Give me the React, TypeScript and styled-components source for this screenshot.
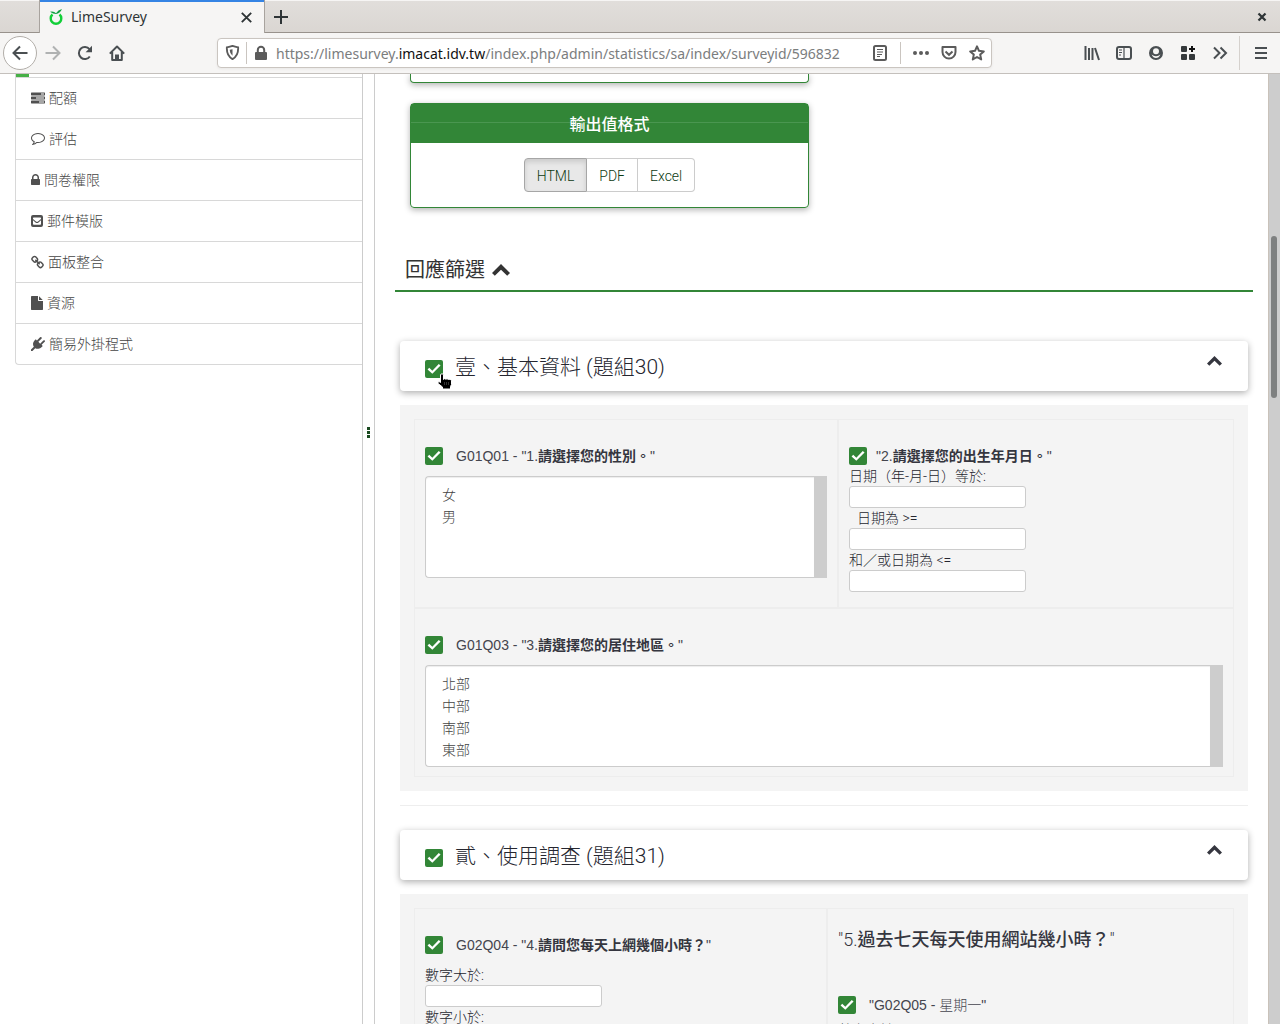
import React from "react";
import styled, { createGlobalStyle } from "styled-components";

const GlobalStyle = createGlobalStyle`
  *, *::before, *::after { box-sizing: border-box; }
  body { margin: 0; background: #fff; overflow: hidden; }
  button, input, select { font: inherit; color: inherit; }
  h2, h3, h4, ul, fieldset { margin: 0; padding: 0; border: 0; min-width: 0; }
`;

const uiFont = `"Noto Sans", "Open Sans", sans-serif`;
const pageFont = `"Liberation Sans", "Noto Sans CJK TC", sans-serif`;
const lightFont = `Roboto, "Noto Sans CJK TC", sans-serif`;

/* ---------- browser window ---------- */

const Window = styled.div`
  display: flex;
  flex-direction: column;
  height: 100vh;
  overflow: hidden;
  font-family: ${pageFont};
  font-weight: 300;
  font-size: 14px;
  line-height: 20px;
  color: #35363f;
`;

const TabStrip = styled.div`
  flex: none;
  display: flex;
  height: 33px;
  padding-left: 39px;
  border-top: 1px solid #f6f5f4;
  background: linear-gradient(#e1dedb, #dad6d2);
  box-shadow: inset 0 -1px #98928c;
  font-family: ${uiFont};
  font-weight: 400;
  color: #2e3436;
`;

const Tab = styled.div`
  display: flex;
  align-items: center;
  width: 226px;
  padding: 1px 10px 0 8px;
  margin-top: -1px;
  border: solid #a8a39e;
  border-width: 0 1px;
  background: #f6f5f4;
  box-shadow: inset 0 2px #3584e4;
`;

const TabTitle = styled.span`
  flex: 1;
  margin-left: 7px;
`;

const PlainButton = styled.button`
  display: flex;
  align-items: center;
  justify-content: center;
  padding: 0;
  border: 0;
  background: none;
`;

const StripButton = styled(PlainButton)<{ $end?: boolean }>`
  width: ${(p) => (p.$end ? 36 : 32)}px;
  margin-left: ${(p) => (p.$end ? "auto" : 0)};
`;

const Toolbar = styled.div`
  flex: none;
  display: flex;
  align-items: center;
  height: 41px;
  padding: 0 3px 1px;
  background: #f6f5f4;
  border-bottom: 1px solid #c4c0bc;
  font-family: ${uiFont};
  font-weight: 400;
  color: #4a4f52;
`;

const ToolButton = styled(PlainButton)<{ $round?: boolean; $faded?: boolean }>`
  width: ${(p) => (p.$round ? 34 : 32)}px;
  height: 34px;
  border: ${(p) => (p.$round ? "1px solid #b2aea9" : "0")};
  border-radius: 50%;
  background: ${(p) => (p.$round ? "#fff" : "none")};
  opacity: ${(p) => (p.$faded ? 0.4 : 1)};
`;

const AddressBar = styled.div`
  flex: 1;
  display: flex;
  align-items: center;
  height: 30px;
  min-width: 0;
  margin: 0 84px;
  border: 1px solid #cac5c0;
  border-radius: 4px;
  background: #fff;
  box-shadow: 0 1px 3px rgba(0, 0, 0, 0.06);
  color: #5b5b5b;
`;

const AddressButton = styled(PlainButton)`
  width: 28px;
  height: 28px;
`;

const AddressText = styled.div`
  flex: 1;
  min-width: 0;
  margin-left: 7px;
  padding-top: 2px;
  overflow: hidden;
  white-space: nowrap;
  color: #7b7d7e;
  b { font-weight: 400; color: #111; }
`;

const AddressRule = styled.span<{ $left?: number }>`
  width: 1px;
  height: 22px;
  margin: 0 6px 0 ${(p) => p.$left ?? 0}px;
  background: #cac5c0;
`;

const ToolbarRule = styled.span`
  width: 1px;
  height: 34px;
  margin: 0 5px 0 3px;
  background: #d5d1cd;
`;

/* ---------- page ---------- */

const Viewport = styled.div`
  flex: 1;
  min-height: 0;
  display: flex;
  overflow: hidden;
`;

const Sidebar = styled.aside`
  flex: 0 0 363px;
  padding-left: 15px;
  border-right: 1px solid #ccc;
`;

const ProgressStub = styled.div`
  width: 14px;
  height: 3px;
  border-left: 1px solid #d8d8d8;
  background: #46b046;
`;

const MenuList = styled.ul`
  list-style: none;
  border: solid #d8d8d8;
  border-width: 0 0 1px 1px;
  border-bottom-left-radius: 4px;
`;

const MenuLink = styled.a`
  display: flex;
  align-items: center;
  gap: 4px;
  height: 41px;
  padding-left: 15px;
  border-top: 1px solid #d8d8d8;
  color: #444;
  text-decoration: none;
  svg { flex: none; }
`;

const Resizer = styled.div`
  flex: 0 0 11px;
  display: flex;
  align-items: center;
  justify-content: center;
  height: 716px;
`;

const Main = styled.main`
  flex: 1;
  min-width: 0;
  padding: 0 15px 0 20px;
  border-left: 1px solid #ccc;
`;

const ScrollTrack = styled.div`
  flex: 0 0 12px;
  padding: 162px 3px 0 2px;
  border-left: 1px solid #c9c2ba;
  background: #cdcdcd;
`;

const ScrollThumb = styled.div`
  height: 162px;
  border-radius: 3px;
  background: #7e8080;
`;

const OptionCard = styled.section`
  width: 399px;
  margin: 0 0 20px 15px;
  border: 1px solid #328637;
  border-radius: 4px;
  box-shadow: 0 2px 6px rgba(0, 0, 0, 0.3);
  text-align: center;
`;

const CardTail = styled(OptionCard)`
  height: 9px;
  border-top: 0;
  border-radius: 0 0 4px 4px;
`;

const CardTitle = styled.h4`
  padding: 11px 0 8px;
  background: linear-gradient(#328637 18px, #4a9650 18px, #4a9650 19px, #328637 19px);
  color: #fff;
  font-size: 16px;
  font-weight: 500;
  line-height: 20px;
`;

const ButtonGroup = styled.div`
  display: flex;
  justify-content: center;
  padding: 15px;
`;

const FormatButton = styled.button<{ $active?: boolean }>`
  height: 34px;
  padding: 2px 12px 0;
  border: 1px solid ${(p) => (p.$active ? "#a6a6a6" : "#ccc")};
  background: ${(p) => (p.$active ? "#e8e8e8" : "#fff")};
  box-shadow: ${(p) => (p.$active ? "inset 0 3px 5px rgba(0,0,0,.125)" : "none")};
  color: #0d3a12;
  font-family: ${lightFont};
  & + & { border-left: 0; }
  &:first-child { border-radius: 4px 0 0 4px; }
  &:last-child { border-radius: 0 4px 4px 0; }
`;

const PageHeading = styled.h2`
  display: flex;
  align-items: center;
  gap: 7px;
  margin-top: 41px;
  padding: 7px 10px 6px;
  border-bottom: 2px solid #328637;
  color: #333;
  font-size: 20px;
  font-weight: 400;
  line-height: 28px;
`;

const Groups = styled.div`
  padding: 49px 5px 0;
`;

const GroupHeader = styled.div`
  position: relative;
  display: flex;
  align-items: flex-start;
  gap: 12px;
  height: 50px;
  padding: 0 25px;
  border-radius: 4px;
  background: #fff;
  box-shadow: 0 2px 7px rgba(0, 0, 0, 0.32);
  input[type="checkbox"] { margin-top: 19px; }
`;

const GroupTitle = styled.h3`
  flex: 1;
  margin-top: 11px;
  font-family: ${lightFont};
  font-size: 21px;
  font-weight: 300;
  line-height: 30px;
  color: #25262f;
`;

const Collapse = styled(PlainButton)`
  width: 17px;
  height: 24px;
  margin-top: 8px;
`;

const GroupPanel = styled.div`
  margin-top: 14px;
  padding: 14px;
  background: #f4f4f4;
`;

const QuestionGrid = styled.div<{ $columns: string }>`
  display: grid;
  grid-template-columns: ${(p) => p.$columns};
`;

const Question = styled.section<{ $wide?: boolean }>`
  grid-column: ${(p) => (p.$wide ? "1 / -1" : "auto")};
  min-width: 0;
  padding: 26px 10px 9px;
  border: 1px solid #ededed;
`;

const CheckLabel = styled.label<{ $tight?: boolean }>`
  display: flex;
  align-items: center;
  gap: ${(p) => (p.$tight ? 9 : 13)}px;
  height: 20px;
  color: #44454e;
  strong { font-weight: 700; color: #35363f; }
`;

const CheckBox = styled.input.attrs({ type: "checkbox" })`
  appearance: none;
  flex: none;
  width: 18px;
  height: 18px;
  margin: 0;
  border-radius: 2px;
  background: #328637;
  display: grid;
  place-items: center;
  &:checked::before {
    content: "";
    width: 14px;
    height: 12px;
    background: #fff;
    clip-path: polygon(4% 54%, 16% 40%, 38% 64%, 84% 8%, 97% 20%, 38% 90%);
  }
`;

const ListBox = styled.div`
  display: flex;
  height: 102px;
  margin-top: 10px;
`;

const List = styled.select`
  flex: 1;
  min-width: 0;
  padding: 6px 12px;
  border: 1px solid #ccc;
  border-right: 0;
  border-radius: 4px 0 0 4px;
  background: #fff;
  box-shadow: inset 0 1px 1px rgba(0, 0, 0, 0.075);
  overflow: hidden;
  outline: 0;
  option {
    min-height: 22px;
    padding: 1px 4px;
    color: #444;
    font-weight: 300;
    line-height: 20px;
  }
`;

const ListTrack = styled.div`
  flex: 0 0 13px;
  background: #cdcdcd;
`;

const Fields = styled.div<{ $top?: number }>`
  display: flex;
  flex-direction: column;
  align-items: flex-start;
  margin: ${(p) => p.$top ?? 0}px 0 6px;
`;

const FieldLabel = styled.label<{ $indent?: boolean }>`
  height: 20px;
  padding-left: ${(p) => (p.$indent ? 8 : 0)}px;
  color: #25262f;
  font-family: ${lightFont};
`;

const Field = styled.input`
  width: 177px;
  height: 22px;
  padding: 0 4px;
  border: 1px solid #ccc;
  border-radius: 3px;
  background: #fff;
`;

const SubHeading = styled.h4`
  margin: -5px 0 45px;
  font-family: ${lightFont};
  font-size: 18px;
  font-weight: 300;
  line-height: 20px;
  b { font-weight: 500; }
`;

const Divider = styled.hr`
  height: 1px;
  margin: 14px 0 24px;
  border: 0;
  background: #eee;
`;

const Pointer = styled.svg`
  position: absolute;
  left: 36px;
  top: 32px;
`;

/* ---------- icons ---------- */

type IconProps = { size?: number; children: React.ReactNode };

const Icon = ({ size = 16, children }: IconProps) => (
  <svg width={size} height={size} viewBox="0 0 16 16" fill="none" stroke="currentColor" strokeWidth="2" aria-hidden>
    {children}
  </svg>
);

const Glyph = ({ w, h = 14, box, d }: { w: number; h?: number; box: string; d: string }) => (
  <svg width={w} height={h} viewBox={box} fill="#505050" fillRule="evenodd" aria-hidden>
    <path d={d} />
  </svg>
);

const Chevron = ({ width }: { width: number }) => (
  <svg width={width} height={Math.round(width * 0.67)} viewBox="0 0 18 12" fill="currentColor" aria-hidden>
    <path d="M9 0 L18 9 L15.2 11.8 L9 5.8 L2.8 11.8 L0 9 Z" />
  </svg>
);

const menu = [
  { text: "配額", w: 14, box: "0 0 1792 1664", d: "M1024 1408h640v-128h-640v128zm-384-512h1024V768H640v128zm640-512h384V256h-384v128zm512 832v256q0 26-19 45t-45 19H64q-26 0-45-19t-19-45v-256q0-26 19-45t45-19h1664q26 0 45 19t19 45zm0-512v256q0 26-19 45t-45 19H64q-26 0-45-19T0 960V704q0-26 19-45t45-19h1664q26 0 45 19t19 45zm0-512v256q0 26-19 45t-45 19H64q-26 0-45-19T0 448V192q0-26 19-45t45-19h1664q26 0 45 19t19 45z" },
  { text: "評估", w: 14, box: "0 128 1792 1792", d: "M896 384q-204 0-381.5 69.5T232.5 641 128 896q0 112 71.5 213.5T401 1285l87 50-27 96q-24 91-70 172 152-63 275-171l43-38 57 6q69 8 130 8 204 0 381.5-69.5t282-187.5 104.5-255-104.5-255-282-187.5T896 384zm896 512q0 174-120 321.5t-326 233-450 85.5q-70 0-145-8-198 175-460 242-49 14-114 22h-5q-15 0-27-10.5t-16-27.5v-1q-3-4-.5-12t2-10 4.5-9.5l6-9 7-8.5 8-9q7-8 31-34.5t34.5-38 31-39.5 32.5-51 27-59 26-76q-157-89-247.5-220T0 896q0-174 120-321.5t326-233T896 256t450 85.5 326 233T1792 896z" },
  { text: "問卷權限", w: 9, box: "0 0 1152 1792", d: "M320 768h512v-192q0-106-75-181t-181-75-181 75-75 181v192zM1152 864v576q0 40-28 68t-68 28h-960q-40 0-68-28t-28-68v-576q0-40 28-68t68-28h32v-192q0-184 132-316t316-132 316 132 132 316v192h32q40 0 68 28t28 68z" },
  { text: "郵件模版", w: 12, box: "0 -1 12 14", d: "M2 0h8q2 0 2 2v8q0 2-2 2H2q-2 0-2-2V2q0-2 2-2zM2.500 2.500L2 3v1l3 2.500q1 .8 2 0L10 4V3l-.5-.5zM2 5.200V9q0 .8.8.8h6.400q.8 0 .8-.8V5.200L7.500 7.400q-1.500 1-3 0z" },
  { text: "面板整合", w: 13, box: "0 0 1664 1664", d: "M1456 1216q0-40-28-68l-208-208q-28-28-68-28-42 0-72 32 3 3 19 18.500t21.500 21.500 15 19 13 25.500 3.500 27.500q0 40-28 68t-68 28q-15 0-27.500-3.500t-25.500-13-19-15-21.500-21.500-18.500-19q-33 31-33 73 0 40 28 68l206 207q27 27 68 27 40 0 68-26l147-146q28-28 28-67zM753 511q0-40-28-68l-206-207q-28-28-68-28-39 0-68 27L236 381q-28 28-28 67 0 40 28 68l208 208q27 27 68 27 42 0 72-31-3-3-19-18.500t-21.500-21.500-15-19-13-25.500-3.500-27.500q0-40 28-68t68-28q15 0 27.500 3.500t25.500 13 19 15 21.500 21.500 18.500 19q33-31 33-73zm895 705q0 120-85 203l-147 146q-83 83-203 83-121 0-204-85l-206-207q-83-83-83-203 0-123 88-209l-88-88q-86 88-208 88-120 0-204-84L100 652q-84-84-84-204t85-203L248 99q83-83 203-83 121 0 204 85l206 207q83 83 83 203 0 123-88 209l88 88q86-88 208-88 120 0 204 84l208 208q84 84 84 204z" },
  { text: "資源", w: 12, box: "0 0 1536 1792", d: "M1024 512V40q22 14 36 28l408 408q14 14 28 36h-472zM896 544q0 40 28 68t68 28h544v1056q0 40-28 68t-68 28H96q-40 0-68-28t-28-68V96q0-40 28-68t68-28h800v544z" },
  { text: "簡易外掛程式", w: 14, box: "0 32 1792 1792", d: "M1755 453q37 38 37 90.500t-37 90.500l-401 400 150 150-160 160q-163 163-389.500 186.500T543 1463l-362 362H0v-181l362-362q-124-185-100.500-411.500T448 481l160-160 150 150 400-401q38-37 91-37t90 37 37 90.500-37 90.500L939 652l234 234 401-400q38-37 91-37t90 37z" },
];

/* ---------- parts ---------- */

const ListQuestion = ({ code, text, options, wide }: { code: string; text: React.ReactNode; options: string[]; wide?: boolean }) => (
  <Question $wide={wide}>
    <CheckLabel>
      <CheckBox defaultChecked />
      <span>{code} - {text}</span>
    </CheckLabel>
    <ListBox>
      <List multiple aria-label={code}>
        {options.map((o) => <option key={o}>{o}</option>)}
      </List>
      <ListTrack />
    </ListBox>
  </Question>
);

const TextField = ({ id, label, indent }: { id: string; label: string; indent?: boolean }) => (
  <>
    <FieldLabel htmlFor={id} $indent={indent}>{label}</FieldLabel>
    <Field id={id} type="text" />
  </>
);

const GroupBar = ({ title, children }: { title: string; children?: React.ReactNode }) => (
  <GroupHeader>
    <CheckBox defaultChecked aria-label={title} />
    <GroupTitle>{title}</GroupTitle>
    <Collapse aria-label="收合"><Chevron width={15} /></Collapse>
    {children}
  </GroupHeader>
);

const Browser = () => (
  <>
    <TabStrip>
      <Tab>
        <svg width="16" height="18" viewBox="0 0 16 18" fill="none" aria-hidden>
          <path d="M4.500 6.500 A5.300 5.300 0 1 0 11.500 6.500" stroke="#12cf38" strokeWidth="2.400" />
          <path d="M2 3.800 Q6 3 8 5.200 Q10 2 14 1 Q12 5.500 8 6 Q5 6 2 3.800Z" fill="#14a043" />
        </svg>
        <TabTitle>LimeSurvey</TabTitle>
        <PlainButton aria-label="關閉分頁">
          <Icon size={15}><path d="M3 3l10 10M13 3L3 13" /></Icon>
        </PlainButton>
      </Tab>
      <StripButton aria-label="新分頁"><Icon><path d="M8 1v14M1 8h14" /></Icon></StripButton>
      <StripButton $end aria-label="關閉視窗"><Icon size={14}><path d="M4 4l8 8M12 4l-8 8" strokeWidth="2.600" /></Icon></StripButton>
    </TabStrip>
    <Toolbar>
      <ToolButton $round aria-label="上一頁"><Icon><path d="M15.500 8H1.500M8 1.500L1.500 8L8 14.500" /></Icon></ToolButton>
      <ToolButton $faded aria-label="下一頁"><Icon><path d="M.5 8h14M8 1.500L14.500 8L8 14.500" /></Icon></ToolButton>
      <ToolButton aria-label="重新載入">
        <Icon><path d="M12.800 11.500A6 6 0 1 1 12.500 4.200" /><path d="M15 .8v6.400H8.600z" fill="currentColor" stroke="none" /></Icon>
      </ToolButton>
      <ToolButton aria-label="首頁">
        <Icon><path d="M.8 8.600L8 1.500l7.200 7.100M3.200 7v8h9.600V7" strokeLinejoin="round" /><path d="M7 14.500v-4h2v4" fill="currentColor" /></Icon>
      </ToolButton>
      <AddressBar>
        <AddressButton aria-label="追蹤保護">
          <Icon size={15}><path d="M2 2.500Q5.500 2 8 1q2.500 1 6 1.500Q14.500 11.500 8 15Q1.500 11.500 2 2.500z" /><path d="M8 4.500v7Q5 9 5 5z" fill="currentColor" stroke="none" /></Icon>
        </AddressButton>
        <AddressRule />
        <Icon><path d="M3 8h10v6H3z" fill="currentColor" strokeLinejoin="round" /><path d="M4.800 7V5a3.200 3.200 0 0 1 6.400 0v2" /></Icon>
        <AddressText contentEditable suppressContentEditableWarning spellCheck={false} role="textbox" aria-label="網址">
          https://limesurvey.<b>imacat.idv.tw</b>/index.php/admin/statistics/sa/index/surveyid/596832
        </AddressText>
        <AddressButton aria-label="閱讀模式">
          <Icon><rect x="2" y="1" width="12" height="14" rx="1.500" /><path d="M5 4.500h6M5 7h6M5 9.500h5M5 11.500h3" strokeWidth="1" /></Icon>
        </AddressButton>
        <AddressRule $left={6} />
        <AddressButton aria-label="更多動作"><Icon><g fill="currentColor" stroke="none"><circle cx="2" cy="8" r="2" /><circle cx="8" cy="8" r="2" /><circle cx="14" cy="8" r="2" /></g></Icon></AddressButton>
        <AddressButton aria-label="Pocket"><Icon><path d="M1.500 2h13v5a6.500 6.500 0 0 1-13 0z" strokeLinejoin="round" /><path d="M4.500 6.500L8 9.800l3.500-3.300" /></Icon></AddressButton>
        <AddressButton aria-label="書籤"><Icon><path d="M8 1.400l2 4.400 4.800.6-3.600 3.200 1 4.800L8 12l-4.200 2.400 1-4.800L1.200 6.400 6 5.800z" strokeLinejoin="round" /></Icon></AddressButton>
      </AddressBar>
      <ToolButton aria-label="書庫"><Icon><path d="M1.500 1v14M5 3v12M8.500 3v12M11 3l4 12" /></Icon></ToolButton>
      <ToolButton aria-label="側邊欄"><Icon><rect x="1" y="2" width="14" height="12" rx="2" /><path d="M8 2v12M3 5h3M3 7.500h3M3 10h2" strokeWidth="1.200" /></Icon></ToolButton>
      <ToolButton aria-label="帳號"><Icon><path fillRule="evenodd" d="M8 1a7 7 0 1 1 0 14a7 7 0 0 1 0-14zM8 3.200a3 3 0 1 0 0 6a3 3 0 0 0 0-6zM3.600 9.500q1.400 3.600 4.400 3.600t4.400-3.600q-2 1.700-4.400 1.700t-4.400-1.700z" fill="currentColor" stroke="none" /></Icon></ToolButton>
      <ToolButton aria-label="擴充套件"><Icon><g fill="#35393b" stroke="none"><rect x="1" y="1" width="6" height="6" rx="1" /><rect x="1" y="9" width="6" height="6" rx="1" /><rect x="9" y="9" width="6" height="6" rx="1" /></g><path d="M12 1v6M9 4h6" stroke="#111" /></Icon></ToolButton>
      <ToolButton aria-label="更多工具"><Icon><path d="M2 2.500L7.500 8L2 13.500M8.500 2.500L14 8l-5.500 5.500" /></Icon></ToolButton>
      <ToolbarRule />
      <ToolButton aria-label="選單"><Icon><path d="M2 3h12M2 8h12M2 13h12" /></Icon></ToolButton>
    </Toolbar>
  </>
);

export default function App() {
  return (
    <Window>
      <GlobalStyle />
      <Browser />
      <Viewport>
        <Sidebar>
          <ProgressStub />
          <MenuList>
            {menu.map((m) => (
              <li key={m.text}>
                <MenuLink href="#"><Glyph w={m.w} box={m.box} d={m.d} />{m.text}</MenuLink>
              </li>
            ))}
          </MenuList>
        </Sidebar>
        <Resizer>
          <svg width="3" height="11" viewBox="0 0 3 11" fill="#1a4a20" aria-hidden>
            <path d="M0 0h3v3H0zM0 4h3v3H0zM0 8h3v3H0z" />
          </svg>
        </Resizer>
        <Main>
          <CardTail />
          <OptionCard>
            <CardTitle>輸出值格式</CardTitle>
            <ButtonGroup>
              <FormatButton $active>HTML</FormatButton>
              <FormatButton>PDF</FormatButton>
              <FormatButton>Excel</FormatButton>
            </ButtonGroup>
          </OptionCard>
          <PageHeading>回應篩選 <Chevron width={18} /></PageHeading>
          <Groups>
            <GroupBar title="壹、基本資料 (題組30)">
              <Pointer width="18" height="18" viewBox="0 0 18 18" aria-hidden>
                <path d="M4.500 1.500q1.500-1.500 3 0V6.500l1-.8 1.500.5 1-.5 1.500.8 1.500-.3 1.500 1.300v4l-1 2v2.500h-8V14L2 10.500q-.5-2 1-2l1.500 1z" fill="#000" stroke="#fff" strokeWidth="1" />
                <path d="M8.500 9v3M10.500 9v3M12.500 9v3" stroke="#333" strokeWidth="1" />
              </Pointer>
            </GroupBar>
            <GroupPanel>
              <QuestionGrid $columns="424fr 396fr">
                <ListQuestion code="G01Q01" text={<>"1.<strong>請選擇您的性別。</strong>"</>} options={["女", "男"]} />
                <Question>
                  <CheckLabel $tight>
                    <CheckBox defaultChecked />
                    <span>"2.<strong>請選擇您的出生年月日。</strong>"</span>
                  </CheckLabel>
                  <Fields>
                    <TextField id="date-eq" label="日期（年-月-日）等於:" />
                    <TextField id="date-from" label="日期為 >=" indent />
                    <TextField id="date-to" label="和／或日期為 <=" />
                  </Fields>
                </Question>
                <ListQuestion wide code="G01Q03" text={<>"3.<strong>請選擇您的居住地區。</strong>"</>} options={["北部", "中部", "南部", "東部"]} />
              </QuestionGrid>
            </GroupPanel>
            <Divider />
            <GroupBar title="貳、使用調查 (題組31)" />
            <GroupPanel>
              <QuestionGrid $columns="413fr 407fr">
                <Question>
                  <CheckLabel>
                    <CheckBox defaultChecked />
                    <span>G02Q04 - "4.<strong>請問您每天上網幾個小時？</strong>"</span>
                  </CheckLabel>
                  <Fields $top={10}>
                    <TextField id="q4-gt" label="數字大於:" />
                    <TextField id="q4-lt" label="數字小於:" />
                  </Fields>
                </Question>
                <Question>
                  <SubHeading>"5.<b>過去七天每天使用網站幾小時？</b>"</SubHeading>
                  <CheckLabel>
                    <CheckBox defaultChecked />
                    <span>"G02Q05 - 星期一"</span>
                  </CheckLabel>
                  <Fields $top={5}>
                    <TextField id="q5-gt" label="數字大於:" />
                  </Fields>
                </Question>
              </QuestionGrid>
            </GroupPanel>
          </Groups>
        </Main>
        <ScrollTrack><ScrollThumb /></ScrollTrack>
      </Viewport>
    </Window>
  );
}
